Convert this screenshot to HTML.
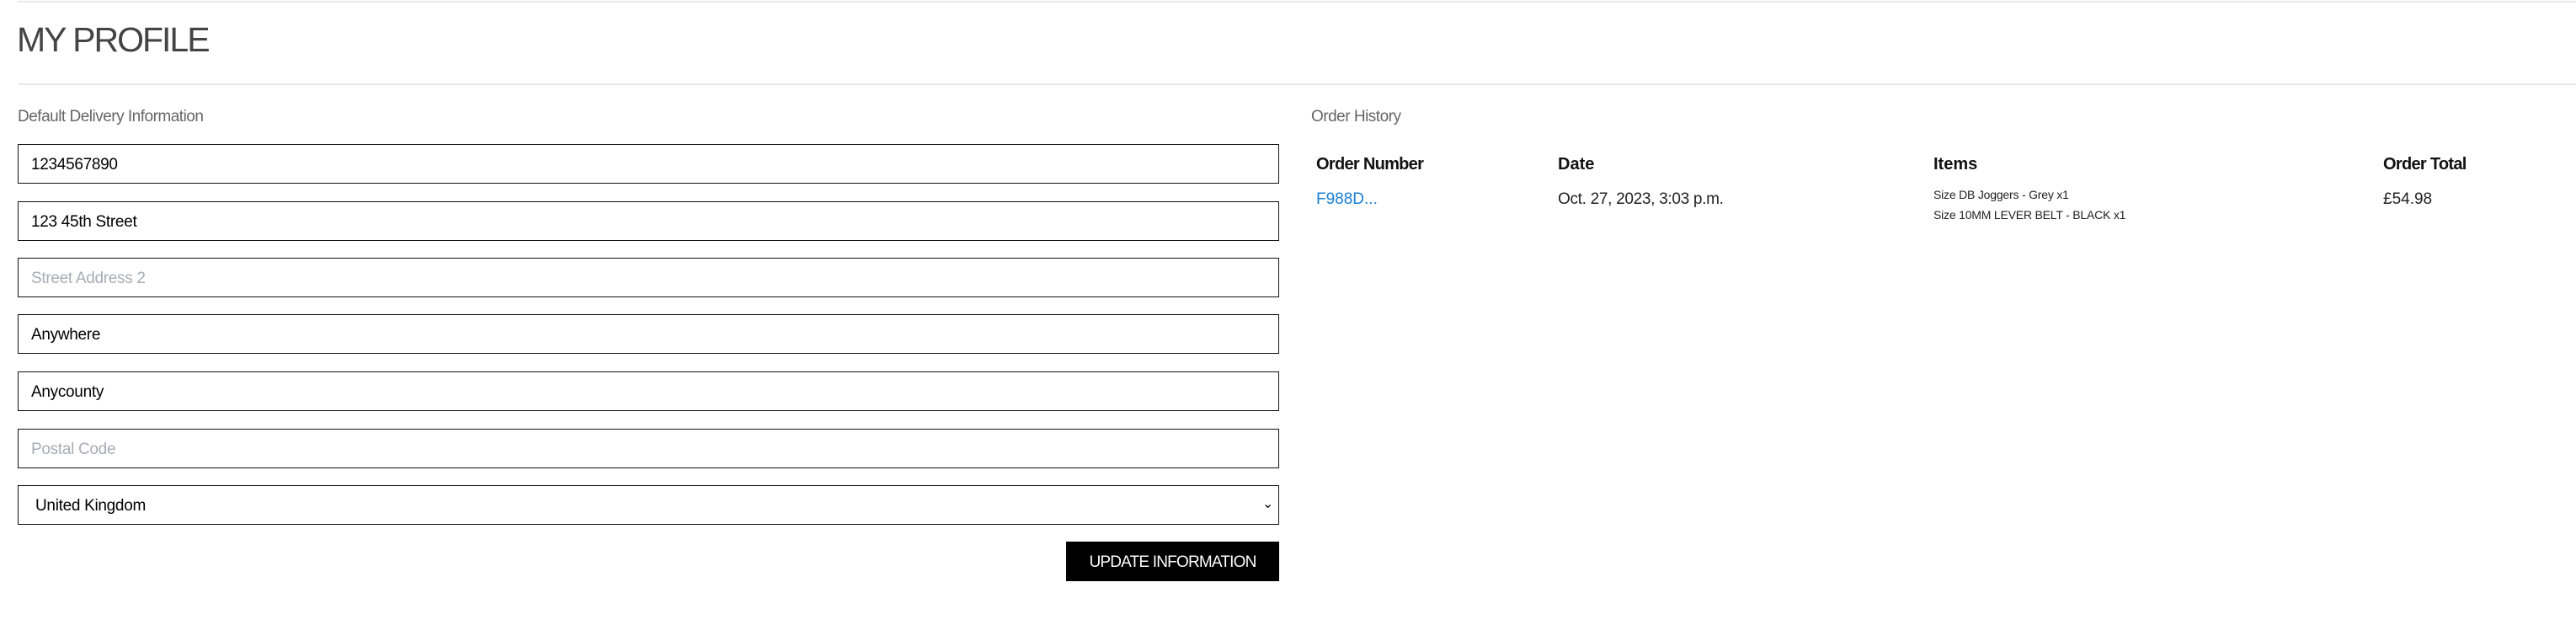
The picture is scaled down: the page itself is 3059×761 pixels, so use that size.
<!DOCTYPE html>
<html><head><style>
body{margin:0;width:3059px;height:761px;background:#fff;font-family:"Liberation Sans",sans-serif;position:relative;overflow:hidden}
.a{position:absolute;white-space:nowrap}
.hr{position:absolute;left:21px;right:0;height:2px;background:#e8e8e8}
.in{position:absolute;left:21px;height:45px;border:1.5px solid #111;box-sizing:content-box;font-size:19px;line-height:48px;padding-left:15px;width:1481px;letter-spacing:-0.3px}
.ph{color:#a7adb5}
</style></head><body>
<div class="hr" style="top:1px"></div>
<div class="a" style="left:20px;top:24px;font-size:41px;color:#444;letter-spacing:-2px">MY PROFILE</div>
<div class="hr" style="top:99px"></div>
<div class="a" style="left:21px;top:128px;font-size:19px;color:#666;letter-spacing:-0.5px">Default Delivery Information</div>
<div class="in" style="top:171px">1234567890</div>
<div class="in" style="top:239px">123 45th Street</div>
<div class="in ph" style="top:306px">Street Address 2</div>
<div class="in" style="top:373px">Anywhere</div>
<div class="in" style="top:441px">Anycounty</div>
<div class="in ph" style="top:509px">Postal Code</div>
<div class="in" style="top:576px;padding-left:20px;width:1476px">United Kingdom<span style="position:absolute;right:6px;top:-2px;font-size:16px">&#8964;</span></div>
<div class="a" style="left:1266px;top:643px;width:253px;height:47px;background:#000;color:#fff;font-size:19px;line-height:49px;text-align:center;letter-spacing:-0.8px">UPDATE INFORMATION</div>
<div class="a" style="left:1557px;top:128px;font-size:19px;color:#666;letter-spacing:-0.5px">Order History</div>
<div class="a" style="left:1563px;top:184px;font-size:20px;font-weight:bold;color:#111;letter-spacing:-0.7px">Order Number</div>
<div class="a" style="left:1850px;top:184px;font-size:20px;font-weight:bold;color:#111">Date</div>
<div class="a" style="left:2296px;top:184px;font-size:20px;font-weight:bold;color:#111">Items</div>
<div class="a" style="left:2830px;top:184px;font-size:20px;font-weight:bold;color:#111;letter-spacing:-0.7px">Order Total</div>
<div class="a" style="left:1563px;top:226px;font-size:19px;color:#1a7fd6">F988D...</div>
<div class="a" style="left:1850px;top:226px;font-size:19px;color:#222;letter-spacing:-0.3px">Oct. 27, 2023, 3:03 p.m.</div>
<div class="a" style="left:2296px;top:223px;font-size:14px;color:#222;letter-spacing:-0.2px">Size DB Joggers - Grey x1</div>
<div class="a" style="left:2296px;top:247px;font-size:14px;color:#222;letter-spacing:-0.2px">Size 10MM LEVER BELT - BLACK x1</div>
<div class="a" style="left:2830px;top:226px;font-size:19px;color:#222">£54.98</div>
</body></html>
